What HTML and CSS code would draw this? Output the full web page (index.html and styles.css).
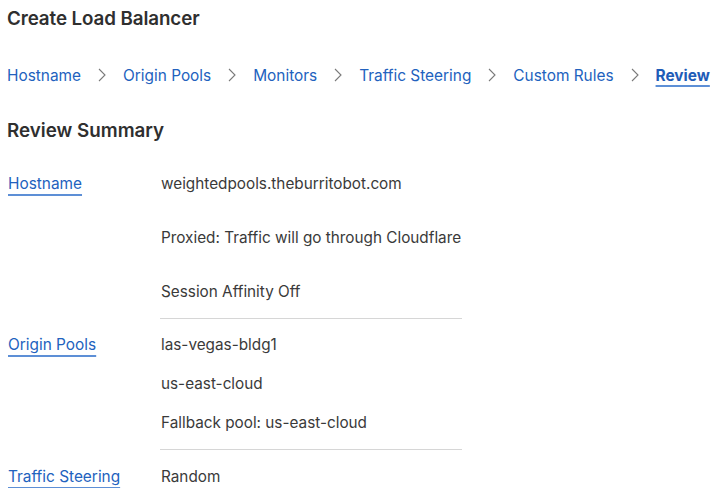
FILE: index.html
```html
<!DOCTYPE html>
<html lang="en">
<head>
<meta charset="utf-8">
<title>Create Load Balancer</title>
<link rel="stylesheet" href="styles.css">
</head>
<body>
<main class="page">
  <h1 class="title">Create Load Balancer</h1>

  <nav class="steps">
    <a class="step" href="#">Hostname</a>
    <svg class="chev" viewBox="0 0 8 14"><path d="M1 1l6 6-6 6"/></svg>
    <a class="step" href="#">Origin Pools</a>
    <svg class="chev" viewBox="0 0 8 14"><path d="M1 1l6 6-6 6"/></svg>
    <a class="step" href="#">Monitors</a>
    <svg class="chev" viewBox="0 0 8 14"><path d="M1 1l6 6-6 6"/></svg>
    <a class="step" href="#">Traffic Steering</a>
    <svg class="chev" viewBox="0 0 8 14"><path d="M1 1l6 6-6 6"/></svg>
    <a class="step" href="#">Custom Rules</a>
    <svg class="chev" viewBox="0 0 8 14"><path d="M1 1l6 6-6 6"/></svg>
    <a class="step current" href="#">Review</a>
  </nav>

  <h2 class="subtitle">Review Summary</h2>

  <section class="summary">
    <div class="row">
      <a class="label" href="#">Hostname</a>
      <div class="values loose">
        <p>weightedpools.theburritobot.com</p>
        <p>Proxied: Traffic will go through Cloudflare</p>
        <p>Session Affinity Off</p>
      </div>
    </div>
    <hr class="sep">
    <div class="row">
      <a class="label" href="#">Origin Pools</a>
      <div class="values tight">
        <p>las-vegas-bldg1</p>
        <p>us-east-cloud</p>
        <p>Fallback pool: us-east-cloud</p>
      </div>
    </div>
    <hr class="sep sep-last">
    <div class="row">
      <a class="label" href="#">Traffic Steering</a>
      <div class="values">
        <p>Random</p>
      </div>
    </div>
  </section>
</main>
</body>
</html>
```
FILE: styles.css
```css
* { box-sizing: border-box; }

html, body {
  margin: 0;
  background: #ffffff;
}

body {
  font-family: Inter, "Noto Sans", "Liberation Sans", sans-serif;
  color: #363636;
}

.page {
  padding: 6px 7px 0;
}

.title {
  margin: 0;
  font-size: 18.8px;
  font-weight: 600;
  line-height: 26px;
  color: #2f2f2f;
  letter-spacing: -0.1px;
}

.steps {
  display: flex;
  align-items: center;
  gap: 17px;
  margin-top: 30px;
  height: 26px;
  white-space: nowrap;
}

.step {
  flex-shrink: 0;
  font-size: 15.4px;
  color: #2262be;
  text-decoration: none;
}

.step.current {
  font-weight: 700;
  color: #1f5cb8;
  text-decoration: underline;
  text-decoration-color: #5d8fd6;
  text-underline-offset: 4px;
  text-decoration-thickness: 2px;
}

.chev {
  flex-shrink: 0;
  width: 8px;
  height: 14px;
  fill: none;
  stroke: #7a7a7a;
  stroke-width: 1.1;
}

.subtitle {
  margin: 30px 0 0;
  font-size: 18.8px;
  font-weight: 600;
  line-height: 26px;
  color: #2f2f2f;
}

.summary {
  margin-top: 29px;
}

.row {
  display: grid;
  grid-template-columns: 154px 1fr;
  align-items: start;
}

.label {
  font-size: 15.4px;
  line-height: 22px;
  color: #2262be;
  text-decoration: underline;
  text-decoration-color: #5d8fd6;
  text-underline-offset: 5px;
  text-decoration-thickness: 1.5px;
  justify-self: start;
  margin-left: 1px;
  white-space: nowrap;
}

.values p {
  margin: 0;
  font-size: 15.3px;
  line-height: 22px;
  color: #3a3a3a;
}

.values.loose { display: flex; flex-direction: column; gap: 32px; }
.values.tight { display: flex; flex-direction: column; gap: 17px; }

.sep {
  border: 0;
  border-top: 1px solid #d6d6d6;
  margin: 15px 0 15px 153px;
  width: 302px;
}

.sep-last {
  margin-bottom: 16px;
}
```
